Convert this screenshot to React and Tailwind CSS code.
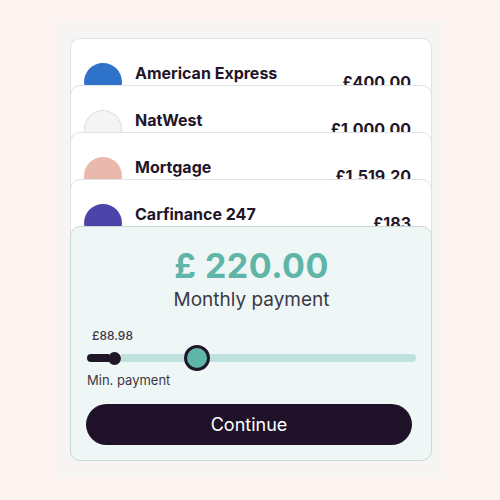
const accounts = [
  { name: 'American Express', amount: '£400.00', dot: 'bg-[#2f72c9]' },
  { name: 'NatWest', amount: '£1,000.00', dot: 'bg-[#f4f4f4] border border-[#dcdcdc]' },
  { name: 'Mortgage', amount: '£1,519.20', dot: 'bg-[#e9b9ae]' },
  { name: 'Carfinance 247', amount: '£183', dot: 'bg-[#4d43a8]' },
];

function AccountCard({ account }) {
  return (
    <div className="relative h-[70px] -mb-[23px] bg-white rounded-[10px] border border-[#e2e2e4] flex items-start pl-[13px] pr-[20px]">
      <div className={`mt-[24px] w-[38px] h-[38px] rounded-full shrink-0 ${account.dot}`} />
      <div className="ml-[13px] mt-[22px] text-[16px] leading-[24px] font-bold text-[#1f1628] flex-1">
        {account.name}
      </div>
      <div className="mt-[31px] text-[16px] leading-[24px] font-bold text-[#1f1628]">
        {account.amount}
      </div>
    </div>
  );
}

function Slider() {
  return (
    <div className="mt-[1px] h-[26px] flex items-center">
      <div className="w-[22px] h-[8px] rounded-l-full bg-[#1f1628]" />
      <div className="-ml-[1px] w-[13px] h-[13px] rounded-full bg-[#1f1628] shrink-0" />
      <div className="w-[63px] h-[8px] bg-[#bde2de]" />
      <div className="w-[26px] h-[26px] rounded-full bg-[#5fb5a8] border-[3px] border-[#1f1628] shrink-0" />
      <div className="flex-1 h-[8px] rounded-r-full bg-[#bde2de]" />
    </div>
  );
}

export default function App() {
  return (
    <div className="w-[500px] h-[500px] bg-[#fdf3f1] pt-[20px] pl-[57px]" style={{ fontFamily: 'Inter, "Noto Sans", sans-serif' }}>
      <div className="w-[386px] h-[458px] bg-[#f6f5f3] pt-[18px] pl-[13px] pr-[11px]">
        {accounts.map((a) => (
          <AccountCard key={a.name} account={a} />
        ))}
        <div className="relative h-[235px] bg-[#eef7f5] rounded-[10px] border border-[#c9d9d5] pl-[16px] pr-[15px] pt-[19px] flex flex-col">
          <div className="text-center text-[34px] leading-[40px] font-bold text-[#5fb5a8] tracking-[0.5px]">£ 220.00</div>
          <div className="mt-[2px] text-center text-[19px] leading-[24px] text-[#3d3846]">Monthly payment</div>
          <div className="mt-[16px] pl-[5px] text-[12px] leading-[16px] font-medium text-[#3d3846]">£88.98</div>
          <Slider />
          <div className="text-[13px] leading-[18px] text-[#3d3846]">Min. payment</div>
          <button className="mt-[15px] -ml-[1px] w-[326px] h-[41px] rounded-full bg-[#1f1228] text-white text-[18px]">
            Continue
          </button>
        </div>
      </div>
    </div>
  );
}
